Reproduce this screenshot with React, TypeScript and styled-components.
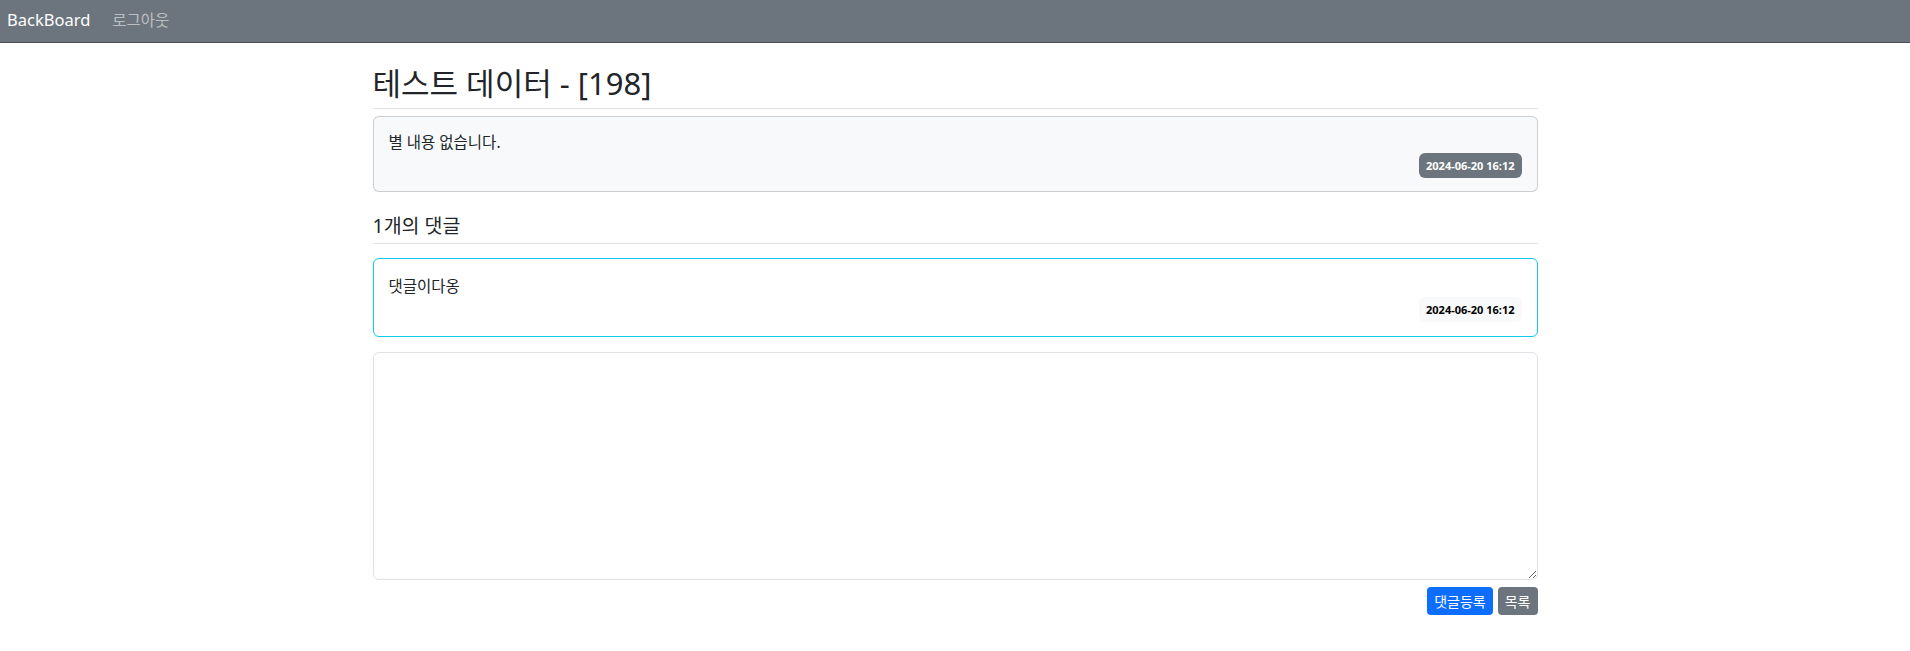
import React from "react";
import styled, { createGlobalStyle } from "styled-components";

const GlobalStyle = createGlobalStyle`
  html, body {
    margin: 0;
    padding: 0;
    background: #ffffff;
  }
  body {
    font-family: "Noto Sans", "Noto Sans CJK KR", sans-serif;
    color: #212529;
    font-size: 14px;
  }
  * { box-sizing: border-box; }
`;

const NavBar = styled.nav`
  height: 43px;
  background: #6c757d;
  border-bottom: 1px solid #4a5056;
  display: flex;
  align-items: center;
  padding: 0 7px;
  gap: 22px;
`;

const Brand = styled.a`
  color: #ffffff;
  font-size: 16.5px;
  text-decoration: none;
  line-height: 1;
  margin-top: -2px;
`;

const NavLink = styled.a`
  color: rgba(255, 255, 255, 0.55);
  font-size: 15.5px;
  text-decoration: none;
  margin-top: -3px;
`;

const Main = styled.main`
  width: 1165px;
  margin: 0 auto;
  display: flex;
  flex-direction: column;
`;

const Title = styled.h2`
  margin: 22px 0 0;
  font-size: 31px;
  font-weight: 400;
  line-height: 37px;
  padding-bottom: 6px;
  border-bottom: 1px solid #dee2e6;
`;

const SubTitle = styled.h4`
  margin: 22px 0 0;
  font-size: 19.5px;
  font-weight: 400;
  line-height: 23px;
  padding-bottom: 6px;
  border-bottom: 1px solid #dee2e6;
`;

const Card = styled.div<{ $variant: "post" | "comment" }>`
  margin-top: ${(p) => (p.$variant === "post" ? "7px" : "14px")};
  border: 1px solid
    ${(p) => (p.$variant === "post" ? "rgba(0,0,0,0.175)" : "#0dcaf0")};
  background: ${(p) => (p.$variant === "post" ? "#f8f9fa" : "#ffffff")};
  border-radius: 6px;
  padding: ${(p) => (p.$variant === "post" ? "15px 15px 13px" : "17px 15px 14px")};
  display: flex;
  flex-direction: column;
`;

const CardText = styled.p`
  margin: 0;
  font-size: 15.5px;
  line-height: 21px;
`;

const BadgeRow = styled.div`
  display: flex;
  justify-content: flex-end;
`;

const Badge = styled.span<{ $tone: "dark" | "light" }>`
  display: inline-flex;
  align-items: center;
  height: 25px;
  padding: 0 7px;
  border-radius: 6px;
  font-size: 11px;
  font-weight: 700;
  background: ${(p) => (p.$tone === "dark" ? "#6c757d" : "#f8f9fa")};
  color: ${(p) => (p.$tone === "dark" ? "#ffffff" : "#000000")};
`;

const TextArea = styled.textarea`
  margin-top: 15px;
  height: 228px;
  width: 100%;
  border: 1px solid #dee2e6;
  border-radius: 6px;
  padding: 6px 12px;
  font-family: inherit;
  font-size: 14px;
  outline: none;
`;

const ButtonRow = styled.div`
  margin-top: 7px;
  display: flex;
  justify-content: flex-end;
  gap: 5px;
`;

const Button = styled.button<{ $tone: "primary" | "secondary" }>`
  height: 28px;
  padding: 0 7px;
  border: none;
  border-radius: 4px;
  font-family: inherit;
  font-size: 14px;
  color: #ffffff;
  background: ${(p) => (p.$tone === "primary" ? "#0d6efd" : "#6c757d")};
  cursor: pointer;
`;

export default function App() {
  return (
    <>
      <GlobalStyle />
      <NavBar>
        <Brand href="#">BackBoard</Brand>
        <NavLink href="#">로그아웃</NavLink>
      </NavBar>
      <Main>
        <Title>테스트 데이터 - [198]</Title>
        <Card $variant="post">
          <CardText>별 내용 없습니다.</CardText>
          <BadgeRow>
            <Badge $tone="dark">2024-06-20 16:12</Badge>
          </BadgeRow>
        </Card>
        <SubTitle>1개의 댓글</SubTitle>
        <Card $variant="comment">
          <CardText>댓글이다옹</CardText>
          <BadgeRow>
            <Badge $tone="light">2024-06-20 16:12</Badge>
          </BadgeRow>
        </Card>
        <TextArea />
        <ButtonRow>
          <Button $tone="primary">댓글등록</Button>
          <Button $tone="secondary">목록</Button>
        </ButtonRow>
      </Main>
    </>
  );
}
